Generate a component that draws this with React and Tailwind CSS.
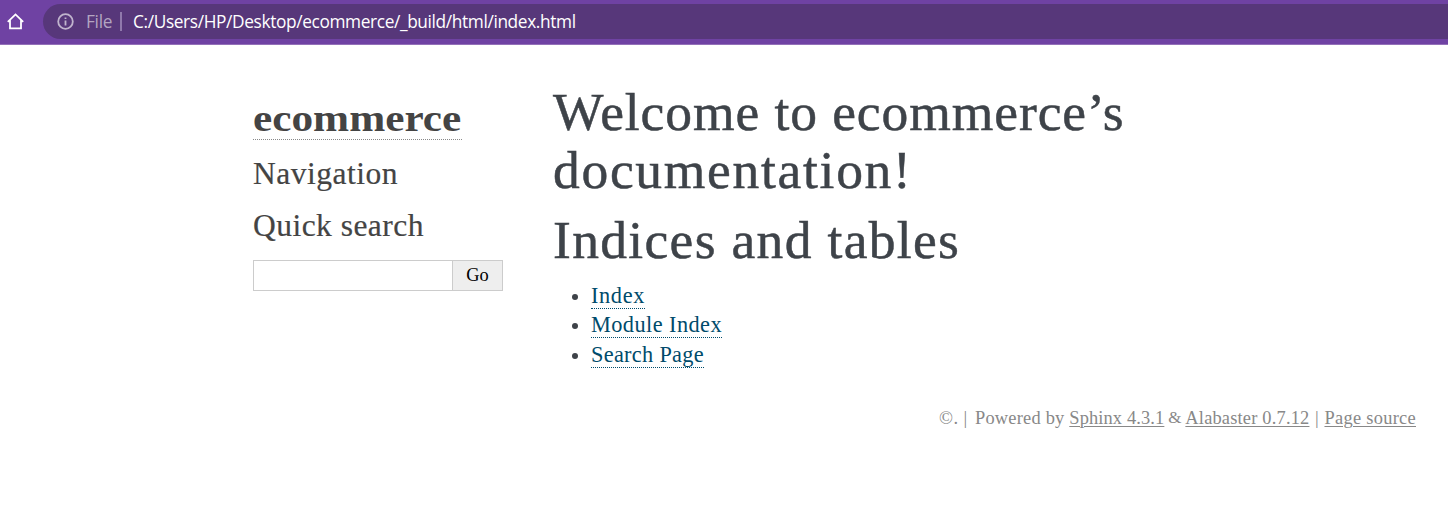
function AddressBar() {
  return (
    <header className="flex h-[45px] items-start border-b border-[#9370b8] bg-[#6f42a3] pt-1">
      <svg className="ml-[6px] mt-[8px] h-[19px] w-[19px] shrink-0" viewBox="0 0 19 19" fill="none" stroke="white" strokeWidth="1.8" strokeLinejoin="miter" strokeLinecap="butt">
        <path d="M1.8 9.8 9.5 2.4 17.2 9.8M4 8V16.4H15V8" />
      </svg>
      <div className="ml-[18px] flex h-[35px] flex-1 items-center rounded-l-full bg-[#57377a] font-['Open_Sans',sans-serif] text-[17.3px] leading-[35px]">
        <svg className="ml-[14px] h-[17px] w-[17px] shrink-0" viewBox="0 0 17 17" fill="none" stroke="#c0b4cd">
          <circle cx="8.5" cy="8.5" r="7.3" strokeWidth="1.8" />
          <path d="M8.5 7.4V12.4M8.5 4.4V6" strokeWidth="1.8" />
        </svg>
        <span className="ml-[12px] w-[27px] tracking-[-0.3px] text-[#b3a5c1]">File</span>
        <span className="ml-[7px] h-[19px] w-[2px] shrink-0 bg-[#9079ac]" />
        <span className="ml-[11px] whitespace-nowrap tracking-[-0.365px] text-white">
          C:/Users/HP/Desktop/ecommerce/_build/html/index.html
        </span>
      </div>
    </header>
  );
}

function Sidebar() {
  return (
    <aside className="w-[250px] shrink-0 whitespace-nowrap pt-[54px] text-[#444]">
      <h1 className="h-[41px] w-[209px] border-b border-dotted border-[#888] text-[37px] font-bold leading-[40px]">
        <a className="inline-block origin-left scale-x-[1.17]">ecommerce</a>
      </h1>
      <h3 className="mt-[15px] h-[38px] text-[31.5px] leading-[38px] tracking-[0.5px] [-webkit-text-stroke:0.2px]">Navigation</h3>
      <h3 className="mt-[14px] h-[38px] text-[31.5px] leading-[38px] tracking-[0.47px] [-webkit-text-stroke:0.2px]">Quick search</h3>
      <form className="mt-[15px] flex h-[31px]">
        <input aria-label="Search" className="w-[199px] shrink-0 border border-r-0 border-[#ccc] bg-white" />
        <button type="button" className="w-[51px] shrink-0 border border-[#ccc] bg-[#eee] text-[18.4px] leading-[29px] text-black">
          Go
        </button>
      </form>
    </aside>
  );
}

const linkClass = "inline-block h-[26px] border-b border-dotted border-[#004b6b]";

function Bullet() {
  return <span className="mr-[12px] mt-[11px] h-[6px] w-[6px] shrink-0 rounded-full bg-[#3e4349]" />;
}

export default function App() {
  return (
    <div className="h-[518px] overflow-hidden bg-white font-['Liberation_Serif',serif]">
      <AddressBar />
      <div className="flex gap-[50px] pl-[253px]">
        <Sidebar />
        <main className="whitespace-nowrap pt-[38px] text-[#3e4349]">
          <h1 className="text-[53.5px] leading-[58px] [-webkit-text-stroke:0.5px]">
            <span className="block tracking-[0.92px]">Welcome to ecommerce’s</span>
            <span className="block tracking-[1.7px]">documentation!</span>
          </h1>
          <h1 className="mt-[12px] text-[53.5px] leading-[58px] tracking-[1.33px] [-webkit-text-stroke:0.5px]">Indices and tables</h1>
          <ul className="mt-[14px] pl-[19px] text-[22.3px] leading-[26px] text-[#004b6b]">
            <li className="flex h-[29px]"><Bullet /><a className={linkClass + " ml-px tracking-[0.65px]"}>Index</a></li>
            <li className="flex h-[30px]"><Bullet /><a className={linkClass + " ml-px tracking-[0.44px]"}>Module Index</a></li>
            <li className="flex h-[29px]"><Bullet /><a className={linkClass + " ml-px tracking-[0.31px]"}>Search Page</a></li>
          </ul>
        </main>
      </div>
      <footer className="mt-[35px] flex justify-end whitespace-pre pr-[32px] text-[18.4px] leading-[24px] text-[#888]">
        <span className="mr-[2.5px] tracking-[0.41px]">©. |</span>
        <span className="tracking-[0.22px]"> Powered by </span>
        <a className="tracking-[0.13px] underline decoration-1 underline-offset-[2px]">Sphinx 4.3.1</a>
        <span className="w-[21px] text-center text-[17px]">&amp;</span>
        <a className="tracking-[0.19px] underline decoration-1 underline-offset-[2px]">Alabaster 0.7.12</a>
        <span className="w-[15px] text-center">|</span>
        <a className="tracking-[0.29px] underline decoration-1 underline-offset-[2px]">Page source</a>
      </footer>
    </div>
  );
}
